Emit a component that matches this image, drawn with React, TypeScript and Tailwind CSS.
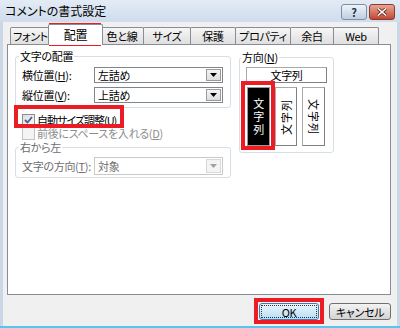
import React from "react";

function U({ children }: { children: React.ReactNode }) {
  return <span className="underline underline-offset-[1px] decoration-1">{children}</span>;
}

function Combo({ text, disabled = false, h = "h-[16px]" }: { text: string; disabled?: boolean; h?: string }) {
  return (
    <div
      className={`flex w-[129px] ${h} border bg-white ${disabled ? "border-[#c9c9c9]" : "border-[#82868c]"}`}
    >
      <div className={`flex-1 flex items-center pl-[3px] ${disabled ? "text-[#6d6d6d]" : "text-black"}`}>{text}</div>
      <div
        className={`w-[15px] m-[1px] flex items-center justify-center border ${
          disabled ? "border-[#d8d8d8] bg-[#f4f4f4]" : "border-[#9a9a9a] bg-gradient-to-b from-[#f4f4f4] to-[#dedede]"
        }`}
      >
        <svg width="7" height="4" viewBox="0 0 7 4">
          <path d="M0 0H7L3.5 4Z" fill={disabled ? "#a0a0a0" : "#000"} />
        </svg>
      </div>
    </div>
  );
}

function Tab({ label, w, selected = false }: { label: string; w: string; selected?: boolean }) {
  if (selected) {
    return (
      <div
        className={`${w} h-[21px] -ml-[3px] -mr-[2px] mb-[-1px] relative z-10 bg-white border border-b-0 border-[#898c95] rounded-t-[2px] flex items-center justify-center text-[12px]`}
      >
        {label}
      </div>
    );
  }
  return (
    <div
      className={`${w} h-[17px] -ml-[1px] first:ml-0 border border-b-0 border-[#898c95] rounded-t-[2px] bg-gradient-to-b from-[#f6f6f6] to-[#dfdfdf] flex items-center justify-center`}
    >
      {label}
    </div>
  );
}

function Red({ cls }: { cls: string }) {
  return <div className={`absolute border-[4px] border-[#ec1c24] pointer-events-none ${cls}`} />;
}

export default function App() {
  return (
    <div className="relative w-[400px] h-[328px] overflow-hidden flex flex-col bg-[#c9d7e7] border-b-[2px] border-[#55c6ef] font-['Noto_Sans_CJK_JP',sans-serif] text-[11px] leading-[12px] text-black whitespace-nowrap tracking-[-0.3px] [font-feature-settings:'palt']">
      {/* title bar */}
      <div className="h-[22px] shrink-0 flex items-center pl-[5px] pr-[5px] bg-gradient-to-b from-[#e3ebf5] to-[#cfdcec]">
        <div className="flex-1 text-[12px] leading-[14px] text-black tracking-[0px]">コメントの書式設定</div>
        <div className="flex items-center gap-[2px] mt-[2px]">
          <div className="w-[26px] h-[16px] rounded-[3px] border border-[#7e8ea4] bg-gradient-to-b from-[#eef3f9] to-[#bfcee0] flex items-center justify-center text-[11px] leading-[11px] text-[#1d2c43] font-bold">
            ?
          </div>
          <div className="w-[26px] h-[16px] rounded-[3px] border border-[#8a3a30] bg-gradient-to-b from-[#e8a596] to-[#c24533] flex items-center justify-center">
            <svg width="10" height="8" viewBox="0 0 10 8">
              <path d="M1 0.5L9 7.5M9 0.5L1 7.5" stroke="#5a1a12" strokeWidth="3" />
              <path d="M1 0.5L9 7.5M9 0.5L1 7.5" stroke="#fff" strokeWidth="1.6" />
            </svg>
          </div>
        </div>
      </div>

      {/* body */}
      <div className="flex-1 mx-[3px] bg-[#f0f0f0] flex flex-col pl-[4px] pr-[6px]">
        {/* tabs */}
        <div className="h-[22px] flex items-end pl-[3px]">
          <Tab label="フォント" w="w-[41px]" />
          <Tab label="配置" w="w-[55px]" selected />
          <Tab label="色と線" w="w-[44px]" />
          <Tab label="サイズ" w="w-[48px]" />
          <Tab label="保護" w="w-[46px]" />
          <Tab label="プロパティ" w="w-[56px]" />
          <Tab label="余白" w="w-[44px]" />
          <Tab label="Web" w="w-[46px]" />
        </div>

        {/* panel */}
        <div className="h-[251px] border border-[#898c95] bg-white flex pl-[7px] pt-[5px]">
          {/* left column */}
          <div className="w-[216px] flex flex-col">
            <fieldset className="border border-[#d5dfe5] rounded-[3px] pl-[3px] pt-[5px] pb-[4px]">
              <legend className="px-[1px] leading-[12px]">文字の配置</legend>
              <div className="flex flex-col gap-[4px] pl-[3px]">
                <div className="flex items-center h-[16px]">
                  <div className="w-[72px]">
                    横位置(<U>H</U>):
                  </div>
                  <Combo text="左詰め" />
                </div>
                <div className="flex items-center h-[16px]">
                  <div className="w-[72px]">
                    縦位置(<U>V</U>):
                  </div>
                  <Combo text="上詰め" />
                </div>
              </div>
            </fieldset>

            <div className="mt-[5px] h-[14px] flex items-center pl-[7px] gap-[2px]">
              <div className="w-[13px] h-[13px] border border-[#8e8f8f] bg-gradient-to-br from-[#dcdcdc] to-[#fbfbfb] flex items-center justify-center">
                <svg width="9" height="8" viewBox="0 0 9 8">
                  <path d="M1 4L3.5 6.5L8 1" stroke="#4a5f97" strokeWidth="1.8" fill="none" />
                </svg>
              </div>
              <div className="leading-[14px] tracking-[-1px]">
                自動サイズ調整(<U>U</U>)
              </div>
            </div>
            <div className="h-[13px] flex items-center pl-[7px] gap-[2px] text-[#8d8d8d]">
              <div className="w-[13px] h-[13px] border border-[#c3c3c3] bg-[#f4f4f4]" />
              <div className="leading-[13px]">
                前後にスペースを入れる(<U>D</U>)
              </div>
            </div>

            <fieldset className="mt-[1px] border border-[#d5dfe5] rounded-[3px] pl-[3px] pt-[4px] pb-[2px]">
              <legend className="px-[1px] leading-[12px] text-[#6d6d6d]">右から左</legend>
              <div className="flex items-center h-[18px] pl-[3px]">
                <div className="w-[72px] text-[#6d6d6d]">
                  文字の方向(<U>T</U>):
                </div>
                <Combo text="対象" disabled h="h-[18px]" />
              </div>
            </fieldset>
          </div>

          {/* right column */}
          <div className="ml-[8px] mt-[1px]">
            <fieldset className="w-[95px] border border-[#d5dfe5] rounded-[3px] pl-[1px] pt-[4px] pb-[6px]">
              <legend className="px-[1px] leading-[12px]">
                方向(<U>N</U>)
              </legend>
              <div className="ml-[5px] w-[81px] flex flex-col">
                <div className="h-[16px] border border-[#a9a9a9] border-r-[#808080] border-b-[#808080] bg-white flex items-center justify-center">
                  文字列
                </div>
                <div className="mt-[4px] h-[59px] flex gap-[5px] ml-[1px]">
                  <div className="w-[23px] border border-[#9a9a9a] bg-black text-white flex flex-col items-center justify-center leading-[13px]">
                    <span>文</span>
                    <span>字</span>
                    <span>列</span>
                  </div>
                  <div className="w-[22px] border border-[#a9a9a9] border-r-[#808080] border-b-[#808080] bg-white flex items-center justify-center">
                    <span className="-rotate-90 tracking-[1px]">文字列</span>
                  </div>
                  <div className="w-[23px] border border-[#a9a9a9] border-r-[#808080] border-b-[#808080] bg-white flex items-center justify-center">
                    <span className="rotate-90 tracking-[1px]">文字列</span>
                  </div>
                </div>
              </div>
            </fieldset>
          </div>
        </div>

        {/* buttons */}
        <div className="flex justify-end gap-[10px] pt-[8px]">
          <div className="w-[60px] h-[17px] rounded-[3px] border border-[#3c7fb1] bg-gradient-to-b from-[#eaf6fd] to-[#b9def4] p-[1px]">
            <div className="w-full h-full border border-dotted border-[#333] flex items-center justify-center leading-[12px]">
              OK
            </div>
          </div>
          <div className="w-[62px] h-[17px] rounded-[3px] border border-[#707070] bg-gradient-to-b from-[#f3f3f3] to-[#d4d4d4] flex items-center justify-center">
            キャンセル
          </div>
        </div>
      </div>

      {/* red highlight boxes */}
      <Red cls="left-[49px] top-[23px] w-[52px] h-[23px]" />
      <Red cls="left-[14px] top-[105px] w-[110px] h-[23px]" />
      <Red cls="left-[241px] top-[81px] w-[34px] h-[69px]" />
      <Red cls="left-[254px] top-[298px] w-[70px] h-[26px]" />
    </div>
  );
}
